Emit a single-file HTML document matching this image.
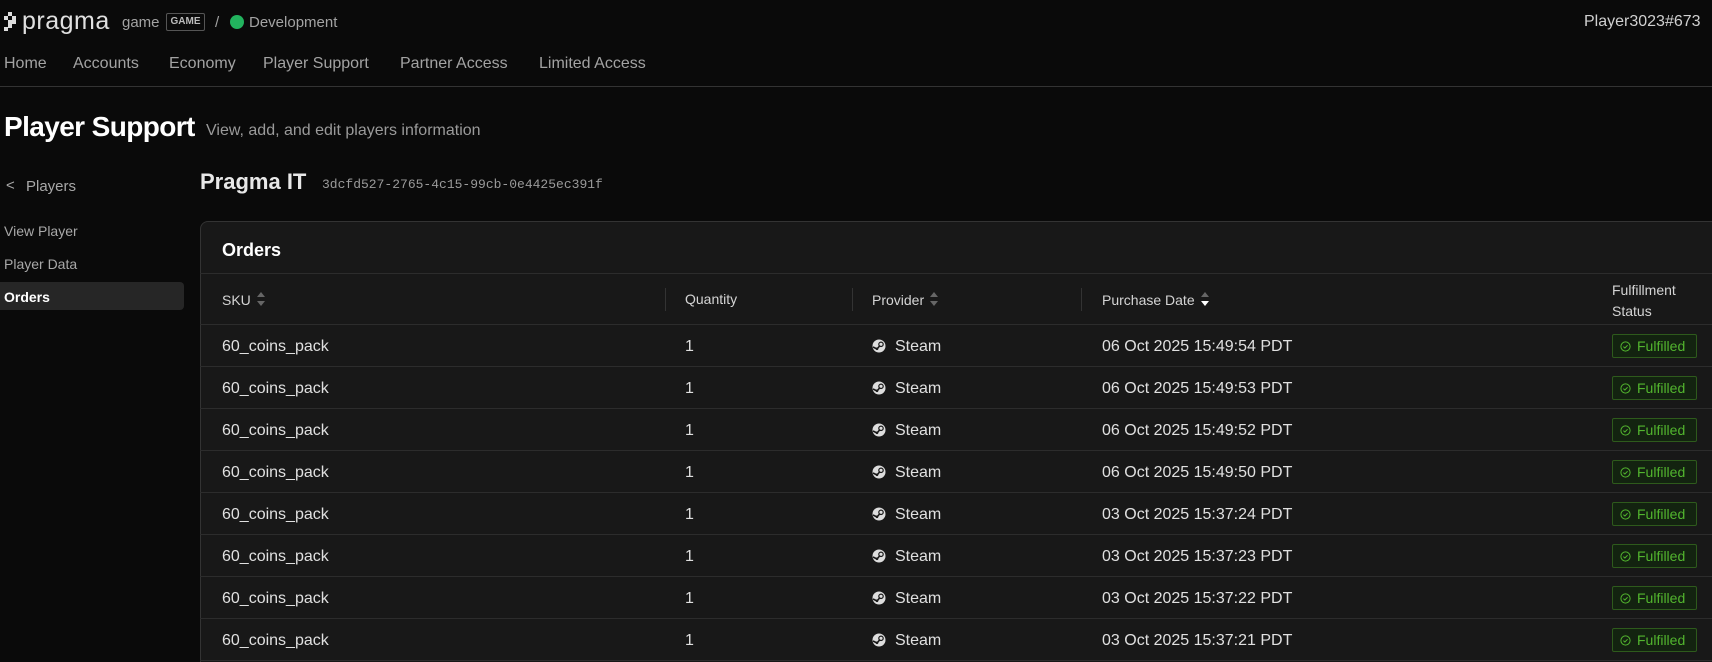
<!DOCTYPE html>
<html style="width:1712px;height:662px;overflow:hidden"><head><meta charset="utf-8"><style>
*{margin:0;padding:0;box-sizing:border-box}
body{width:1712px;height:662px;overflow:hidden;background:#0a0a0a;font-family:"Liberation Sans",sans-serif;color:#e6e6e6;position:relative}
.a{position:absolute;white-space:nowrap}
.nav{font-size:16px;color:#a3a3a3;top:55px}
.side{font-size:14px;color:#a8a8a8;left:4px}
.card{position:absolute;left:200px;top:221px;width:1512px;height:441px;background:#181818;border:1px solid #333;border-right:none;border-bottom:none;border-radius:8px 0 0 0}
.hl{position:absolute;left:200px;width:1512px;height:1px;background:#2c2c2c}
.th{font-size:14px;color:#d4d4d4;top:291px}
.td{font-size:16px;color:#e0e0e0}
.sep{position:absolute;width:1px;height:23px;top:288px;background:#333}
.badge{position:absolute;left:1612px;width:85px;height:24px;background:#132310;border:1px solid #2e5a1c;border-radius:2px;color:#52b52e;font-size:14px;line-height:22px;padding-left:7px}
.badge svg{vertical-align:-1px;margin-right:6px}
.sort{display:inline-block;vertical-align:-2px;margin-left:5px}
</style></head><body>
<svg class="a" style="left:4px;top:12px" width="13" height="19" viewBox="0 0 13 19"><g fill="#ddd"><rect x="4" y="0" width="4" height="4"/><rect x="8" y="4" width="4" height="4"/><rect x="0" y="4" width="4" height="4"/><rect x="4" y="8" width="8" height="4"/><rect x="4" y="12" width="4" height="4"/><rect x="0" y="15" width="4" height="4"/></g></svg>
<div class="a" style="left:22px;top:7px;font-size:25px;color:#e0e0e0;letter-spacing:0.5px">pragma</div>
<div class="a" style="left:122px;top:14px;font-size:15px;color:#a3a3a3">game</div>
<div class="a" style="left:166px;top:13px;width:39px;height:18px;border:1px solid #555;border-radius:2px;font-size:10px;font-weight:bold;color:#bbb;text-align:center;line-height:16px">GAME</div>
<div class="a" style="left:215px;top:14px;font-size:15px;color:#a3a3a3">/</div>
<div class="a" style="left:230px;top:15px;width:14px;height:14px;border-radius:50%;background:#22b35e"></div>
<div class="a" style="left:249px;top:14px;font-size:15px;color:#a3a3a3">Development</div>
<div class="a" style="left:1584px;top:13px;font-size:16px;color:#d0d0d0">Player3023#673</div>
<div class="a nav" style="left:4px">Home</div>
<div class="a nav" style="left:73px">Accounts</div>
<div class="a nav" style="left:169px">Economy</div>
<div class="a nav" style="left:263px">Player Support</div>
<div class="a nav" style="left:400px">Partner Access</div>
<div class="a nav" style="left:539px">Limited Access</div>
<div class="a" style="left:0;top:86px;width:1712px;height:1px;background:#333"></div>
<div class="a" style="left:4px;top:111px;font-size:28px;font-weight:bold;color:#fff;letter-spacing:-0.6px">Player Support</div>
<div class="a" style="left:206px;top:122px;font-size:16px;color:#9a9a9a">View, add, and edit players information</div>
<div class="a side" style="left:6px;top:177px;font-size:15px">&lt;</div>
<div class="a side" style="left:26px;top:178px;font-size:15px">Players</div>
<div class="a side" style="top:223px">View Player</div>
<div class="a side" style="top:256px">Player Data</div>
<div class="a" style="left:0;top:282px;width:184px;height:28px;background:#262626;border-radius:0 4px 4px 0"></div>
<div class="a side" style="top:289px;color:#fff;font-weight:bold">Orders</div>
<div class="a" style="left:200px;top:169px;font-size:22px;font-weight:bold;color:#e8e8e8">Pragma IT</div>
<div class="a" style="left:322px;top:177px;font-size:13px;font-family:'Liberation Mono',monospace;color:#9a9a9a">3dcfd527-2765-4c15-99cb-0e4425ec391f</div>
<div class="card"></div>
<div class="a" style="left:222px;top:240px;font-size:18px;font-weight:bold;color:#fff">Orders</div>
<div class="hl" style="top:273px"></div>
<div class="hl" style="top:324px"></div>
<div class="sep" style="left:665px"></div><div class="sep" style="left:852px"></div><div class="sep" style="left:1081px"></div>
<div class="a th" style="left:222px">SKU<svg class="sort" width="10" height="16" viewBox="0 0 10 16"><path d="M1 6L5 1L9 6Z M1 10L5 15L9 10Z" fill="#666"/></svg></div>
<div class="a th" style="left:685px">Quantity</div>
<div class="a th" style="left:872px">Provider<svg class="sort" width="10" height="16" viewBox="0 0 10 16"><path d="M1 6L5 1L9 6Z M1 10L5 15L9 10Z" fill="#666"/></svg></div>
<div class="a th" style="left:1102px">Purchase Date<svg class="sort" width="10" height="16" viewBox="0 0 10 16"><path d="M1 6L5 1L9 6Z" fill="#666"/><path d="M1 10L5 15L9 10Z" fill="#fff"/></svg></div>
<div class="a th" style="left:1612px;top:280px;line-height:21px">Fulfillment<br>Status</div>
<div id="rows"></div>
<script>
var d=["06 Oct 2025 15:49:54 PDT","06 Oct 2025 15:49:53 PDT","06 Oct 2025 15:49:52 PDT","06 Oct 2025 15:49:50 PDT","03 Oct 2025 15:37:24 PDT","03 Oct 2025 15:37:23 PDT","03 Oct 2025 15:37:22 PDT","03 Oct 2025 15:37:21 PDT"];
var h="";
for(var i=0;i<8;i++){var t=324+i*42;var c=t+14;
h+='<div class="a td" style="left:222px;top:'+c+'px">60_coins_pack</div>';
h+='<div class="a td" style="left:685px;top:'+c+'px">1</div>';
h+='<svg class="a" style="left:872px;top:'+(t+15)+'px" width="14" height="14" viewBox="0 0 14 14"><circle cx="7" cy="7" r="6.5" fill="#ddd"/><circle cx="9" cy="5.3" r="2.2" fill="none" stroke="#181818" stroke-width="1.2"/><path d="M1 8L5 10L8 6.5" stroke="#181818" stroke-width="1.6" fill="none"/><circle cx="5" cy="9.8" r="1.3" fill="#181818"/></svg>';
h+='<div class="a td" style="left:895px;top:'+c+'px">Steam</div>';
h+='<div class="a td" style="left:1102px;top:'+c+'px">'+d[i]+'</div>';
h+='<div class="badge" style="top:'+(t+10)+'px"><svg width="11" height="11" viewBox="0 0 11 11"><circle cx="5.5" cy="5.5" r="4.6" fill="none" stroke="#52b52e" stroke-width="1"/><path d="M3.4 5.6L4.9 7L7.6 4.2" fill="none" stroke="#52b52e" stroke-width="1"/></svg>Fulfilled</div>';
h+='<div class="hl" style="top:'+(t+42)+'px"></div>';}
document.getElementById("rows").innerHTML=h;
</script>
</body></html>
